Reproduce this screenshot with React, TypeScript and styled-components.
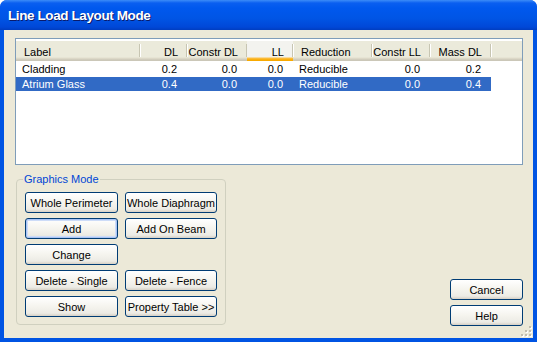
import React from 'react';
import styled, { createGlobalStyle } from 'styled-components';

interface Column {
  key: string;
  title: string;
  width: number;
  align: 'left' | 'right';
  sorted?: boolean;
}

const columns: Column[] = [
  { key: 'label', title: 'Label', width: 124, align: 'left' },
  { key: 'dl', title: 'DL', width: 47, align: 'right' },
  { key: 'cdl', title: 'Constr DL', width: 60, align: 'right' },
  { key: 'll', title: 'LL', width: 46, align: 'right', sorted: true },
  { key: 'red', title: 'Reduction', width: 79, align: 'left' },
  { key: 'cll', title: 'Constr LL', width: 58, align: 'right' },
  { key: 'mdl', title: 'Mass DL', width: 61, align: 'right' },
];

const rows = [
  { label: 'Cladding', dl: '0.2', cdl: '0.0', ll: '0.0', red: 'Reducible', cll: '0.0', mdl: '0.2' },
  { label: 'Atrium Glass', dl: '0.4', cdl: '0.0', ll: '0.0', red: 'Reducible', cll: '0.0', mdl: '0.4' },
];

const modeButtons: (string | null)[][] = [
  ['Whole Perimeter', 'Whole Diaphragm'],
  ['Add', 'Add On Beam'],
  ['Change', null],
  ['Delete - Single', 'Delete - Fence'],
  ['Show', 'Property Table >>'],
];

const GlobalStyle = createGlobalStyle`
  html, body {
    margin: 0;
    padding: 0;
    background: #ffffff;
  }
  body {
    font-family: "Liberation Sans", Arial, sans-serif;
    font-size: 11px;
  }
`;

const Window = styled.div`
  width: 537px;
  height: 342px;
  display: flex;
  flex-direction: column;
  background: #0054e3;
  border-radius: 7px 7px 0 0;
  overflow: hidden;
  box-sizing: border-box;
`;

const TitleBar = styled.div`
  height: 30px;
  flex: none;
  display: flex;
  align-items: center;
  padding: 1px 0 0 8px;
  box-sizing: border-box;
  background: linear-gradient(
    to bottom,
    #3c8cf8 0px,
    #0a5ff0 3px,
    #0058ee 8px,
    #0055e5 18px,
    #0048d8 27px,
    #003dc0 30px
  );
  color: #ffffff;
  font-family: "Liberation Sans", Arial, sans-serif;
  font-weight: bold;
  font-size: 13.5px;
  letter-spacing: -0.4px;
  text-shadow: 1px 1px 0 #0a1a6a;
`;

const Body = styled.div`
  position: relative;
  flex: 1;
  margin: 0 4px 4px 4px;
  background: #ece9d8;
  padding: 8px 10px 12px 11px;
  display: flex;
  flex-direction: column;
  box-sizing: border-box;
`;

const ListBox = styled.div`
  height: 127px;
  flex: none;
  border: 1px solid #7f9db9;
  background: #ffffff;
  box-sizing: border-box;
  padding-top: 2px;
  overflow: hidden;
`;

const HeaderRow = styled.div`
  display: flex;
  height: 20px;
  background: linear-gradient(
    to bottom,
    #ebeadb 0px,
    #ebeadb 16px,
    #e2decd 17px,
    #d6d2c2 18px,
    #cbc7b8 19px
  );
`;

const HeaderCell = styled.div<{ $w: number; $align: string; $sorted?: boolean }>`
  position: relative;
  width: ${(p) => p.$w}px;
  flex: none;
  display: flex;
  align-items: center;
  justify-content: ${(p) => (p.$align === 'right' ? 'flex-end' : 'flex-start')};
  padding: 1px ${(p) => (p.$align === 'right' ? '9px' : '0')} 0
    ${(p) => (p.$align === 'right' ? '0' : '8px')};
  box-sizing: border-box;
  color: #000000;
  background: ${(p) =>
    p.$sorted
      ? 'linear-gradient(to bottom, #f3f3ef 0px, #f3f3ef 16px, #fcc14a 17px, #f8a900 19px)'
      : 'transparent'};
  &::after {
    content: '';
    position: absolute;
    right: 0;
    top: 3px;
    bottom: 4px;
    width: 1px;
    background: #c7c5b2;
    box-shadow: 1px 0 0 #ffffff;
  }
`;

const HeaderFill = styled.div`
  flex: 1;
`;

const DataRow = styled.div<{ $selected?: boolean }>`
  display: flex;
  width: 475px;
  height: 14px;
  margin-top: 1px;
  background: ${(p) => (p.$selected ? '#316ac5' : 'transparent')};
  color: ${(p) => (p.$selected ? '#ffffff' : '#000000')};
`;

const Cell = styled.div<{ $w: number; $align: string }>`
  width: ${(p) => p.$w}px;
  flex: none;
  display: flex;
  align-items: center;
  justify-content: ${(p) => (p.$align === 'right' ? 'flex-end' : 'flex-start')};
  padding: 0 ${(p) => (p.$align === 'right' ? '10px' : '0')} 0
    ${(p) => (p.$align === 'right' ? '0' : '6px')};
  box-sizing: border-box;
  white-space: nowrap;
`;

const BottomArea = styled.div`
  flex: 1;
  display: flex;
  justify-content: space-between;
  align-items: flex-end;
`;

const GroupBox = styled.fieldset`
  margin: 0 0 1px 1px;
  width: 210px;
  height: 152px;
  box-sizing: border-box;
  border: 1px solid #d0d0bf;
  border-radius: 4px;
  padding: 6px 8px 0 8px;
`;

const GroupLegend = styled.legend`
  color: #0046d5;
  padding: 0 1px;
  margin-left: -2px;
  font-size: 11px;
  line-height: 13px;
`;

const ModeGrid = styled.div`
  display: grid;
  grid-template-columns: 93px 92px;
  grid-auto-rows: 21px;
  column-gap: 7px;
  row-gap: 5px;
`;

const XpButton = styled.button<{ $default?: boolean; $w?: number }>`
  width: ${(p) => (p.$w ? `${p.$w}px` : '100%')};
  height: 21px;
  margin: 0;
  padding: 0;
  border: 1px solid #003c74;
  border-radius: 3px;
  background: linear-gradient(to bottom, #ffffff 0%, #f5f4ee 50%, #ecebe5 85%, #d6d0c5 100%);
  font-family: "Liberation Sans", Arial, sans-serif;
  font-size: 11px;
  color: #000000;
  white-space: nowrap;
  box-shadow: ${(p) =>
    p.$default ? 'inset 0 0 0 1px #a9c4f5, inset 0 0 0 2px #cddcf8' : 'none'};
`;

const Spacer = styled.div``;

const SideButtons = styled.div`
  display: flex;
  flex-direction: column;
  gap: 5px;
`;

const Grip = styled.svg`
  position: absolute;
  right: 1px;
  bottom: 1px;
`;

const ResizeGrip: React.FC = () => {
  const dots: [number, number][] = [
    [9, 1], [9, 5], [9, 9], [5, 5], [5, 9], [1, 9],
  ];
  return (
    <Grip width="12" height="12" viewBox="0 0 12 12">
      {dots.map(([x, y]) => (
        <g key={`${x}-${y}`}>
          <rect x={x + 1} y={y + 1} width="2" height="2" fill="#ffffff" />
          <rect x={x} y={y} width="2" height="2" fill="#c1bdae" />
        </g>
      ))}
    </Grip>
  );
};

const App: React.FC = () => {
  return (
    <>
      <GlobalStyle />
      <Window>
        <TitleBar>Line Load Layout Mode</TitleBar>
        <Body>
          <ListBox>
            <HeaderRow>
              {columns.map((c) => (
                <HeaderCell key={c.key} $w={c.width} $align={c.align} $sorted={c.sorted}>
                  {c.title}
                </HeaderCell>
              ))}
              <HeaderFill />
            </HeaderRow>
            {rows.map((r, i) => (
              <DataRow key={r.label} $selected={i === 1}>
                {columns.map((c) => (
                  <Cell key={c.key} $w={c.width} $align={c.align}>
                    {r[c.key as keyof typeof r]}
                  </Cell>
                ))}
              </DataRow>
            ))}
          </ListBox>
          <BottomArea>
            <GroupBox>
              <GroupLegend>Graphics Mode</GroupLegend>
              <ModeGrid>
                {modeButtons.flat().map((label, i) =>
                  label ? (
                    <XpButton key={label} $default={label === 'Add'}>
                      {label}
                    </XpButton>
                  ) : (
                    <Spacer key={`empty-${i}`} />
                  )
                )}
              </ModeGrid>
            </GroupBox>
            <SideButtons>
              <XpButton $w={73}>Cancel</XpButton>
              <XpButton $w={73}>Help</XpButton>
            </SideButtons>
          </BottomArea>
          <ResizeGrip />
        </Body>
      </Window>
    </>
  );
};

export default App;
